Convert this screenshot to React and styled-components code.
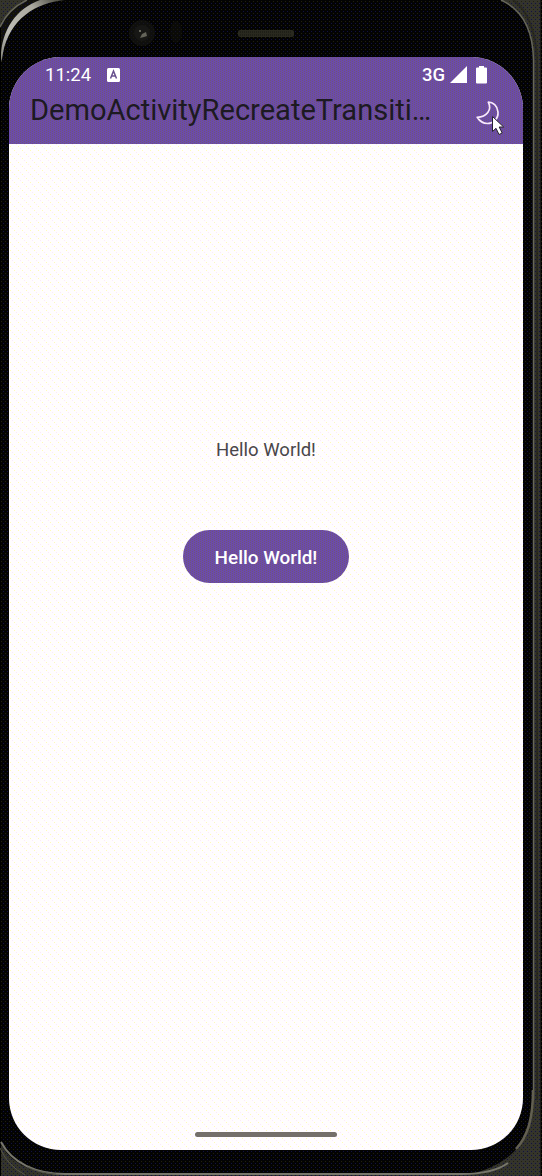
import React from "react";
import styled, { createGlobalStyle, css } from "styled-components";

const GlobalStyle = createGlobalStyle`
  body { margin: 0; background: #060603; overflow: hidden; }
  * { box-sizing: border-box; }
`;

const purpleDither = css`
  background-color: #6b4bac;
  background-image:
    radial-gradient(circle at 1.5px 1.5px, #725671 0.7px, transparent 0.8px),
    radial-gradient(circle at 1.5px 1.5px, #725671 0.7px, transparent 0.8px),
    radial-gradient(circle at 1.5px 1.5px, #725671 0.7px, transparent 0.8px),
    radial-gradient(circle at 1.5px 1.5px, #725671 0.7px, transparent 0.8px);
  background-size: 4px 4px;
  background-position: 0 0, 2px 1px, 0 2px, 2px 3px;
`;

const Device = styled.main`
  position: relative;
  width: 542px;
  height: 1176px;
  padding: 57px 19px 26px 9px;
  overflow: hidden;
  font-family: Roboto, "Liberation Sans", sans-serif;
`;

const FrameArt = styled.svg`
  position: absolute;
  inset: 0;
`;

const Screen = styled.section`
  position: relative;
  display: flex;
  flex-direction: column;
  width: 514px;
  height: 1093px;
  border-radius: 52px;
  overflow: hidden;
  background-color: #fffdfe;
  background-image:
    radial-gradient(circle at 0.5px 0.5px, #fffbb4 0.6px, transparent 0.61px),
    radial-gradient(circle at 0.5px 0.5px, #fffbb4 0.6px, transparent 0.61px),
    radial-gradient(circle at 0.5px 0.5px, #fbe8fb 0.6px, transparent 0.61px),
    radial-gradient(circle at 0.5px 0.5px, #fbe8fb 0.6px, transparent 0.61px);
  background-size: 8px 8px;
  background-position: 1px 1px, 5px 5px, 3px 3px, 7px 7px;
`;

const Header = styled.header`
  flex: none;
  height: 87px;
  ${purpleDither}
`;

const StatusBar = styled.div`
  display: flex;
  align-items: center;
  height: 34px;
  padding: 1px 36px 0 36px;
  color: #fff;
  font-size: 18px;
`;

const Clock = styled.span`
  width: 62px;
  font-size: 18.5px;
`;

const Signals = styled.div`
  display: flex;
  align-items: center;
  margin-left: auto;
  font-size: 18.5px;
  font-weight: 500;
`;

const Signal = styled.svg`
  margin-left: 5px;
`;

const Battery = styled.svg`
  margin-left: 9px;
`;

const AppBar = styled.div`
  display: flex;
  align-items: center;
  justify-content: space-between;
  height: 40px;
  padding: 0 21.5px 3px 21px;
`;

const Title = styled.h1`
  margin: 0;
  color: #1d1a22;
  font-size: 29.05px;
  line-height: 36px;
  font-weight: 400;
  white-space: nowrap;
`;

const ThemeButton = styled.button`
  display: flex;
  width: 28px;
  height: 28px;
  padding: 0;
  border: 0;
  background: none;
  transform: translateY(3px);
`;

const Content = styled.div`
  flex: 1;
  display: flex;
  flex-direction: column;
  align-items: center;
  padding-top: 295px;
`;

const Message = styled.p`
  margin: 0 0 69px;
  font-size: 18.5px;
  line-height: 22px;
  color: #49464a;
`;

const ActionButton = styled.button`
  width: 166px;
  height: 53px;
  padding: 2px 0 0;
  border: 0;
  border-radius: 27px;
  color: #fff;
  font: 500 18.9px Roboto, sans-serif;
  ${purpleDither}
`;

const HomeIndicator = styled.div`
  flex: none;
  align-self: center;
  width: 142px;
  height: 5px;
  margin-bottom: 13px;
  border-radius: 3px;
  background: #747069;
`;

const Pointer = styled.svg`
  position: absolute;
  left: 490.5px;
  top: 115px;
`;

function DeviceFrame() {
  return (
    <FrameArt width="542" height="1176" viewBox="0 0 542 1176" fill="none" aria-hidden="true">
      <defs>
        <pattern id="grain" width="4" height="4" patternUnits="userSpaceOnUse">
          <path d="M1 1h1v1h-1z" fill="#22220c" />
          <path d="M3 3h1v1h-1z" fill="#101044" />
        </pattern>
        <linearGradient id="rim" x1="0" y1="60" x2="62" y2="0" gradientUnits="userSpaceOnUse">
          <stop stopColor="#85857b" />
          <stop offset=".3" stopColor="#bdbdb7" />
          <stop offset=".7" stopColor="#aaa99e" />
          <stop offset="1" stopColor="#44443a" />
        </linearGradient>
      </defs>
      <path d="M0 0h542v1176H0z" fill="#34342c" />
      <path d="M540.5 0H542v1176h-1.5zM0 28h1v1148H0z" fill="#000" />
      <path d="M0 28Q8 9 27 0H65V60H1V28z" fill="#11110d" />
      <path d="M1 60C3 26 27 5 60 0H501C522 9 533 29 533 60V1100C533 1138 512 1165 470 1174H62C30 1174 7 1160 1 1143Z" fill="#030303" />
      <path d="M513 0C528 10 536 33 537 60V1100" stroke="#292920" strokeWidth="2" />
      <path d="M0 0h542v1176H0z" fill="url(#grain)" />
      <path d="M0 27Q8 9 27 0" stroke="#666659" strokeWidth="1.5" />
      <path d="M1 58C1 30 17 8 40 0H65C35 3 10 19 3 53L1.5 62Z" fill="url(#rim)" />
      <path d="M501 0C521 9 533 29 533.5 60V1100" stroke="#66665a" strokeWidth="1.5" />
      <path d="M533 1090C533 1118 528 1136 516 1149" stroke="#625f50" strokeWidth="2.5" />
      <path d="M508 1163C497 1171 481 1174 462 1174H65C36 1174 12 1163 1 1142" stroke="#77766b" strokeWidth="2" />
      <path d="M0 1148Q7 1165 25 1175" stroke="#555548" strokeWidth="1" />
      <path d="M27 1167Q40 1173 56 1174" stroke="#55554a" strokeWidth="1" />
      <circle cx="142" cy="33" r="13" fill="#171714" fillOpacity=".6" />
      <circle cx="142" cy="33" r="8" fill="#171715" />
      <path d="M139 30h2v2h-2zM142 34l4-2 1 4-3 1-4 1z" fill="#64645a" />
      <ellipse cx="176" cy="32" rx="6" ry="11" fill="#11110b" fillOpacity=".5" />
      <rect x="238" y="30" width="56" height="7" rx="2" fill="#29291f" />
      <path d="M240 32h52M240 35h52" stroke="#161610" strokeDasharray="1 1" />
    </FrameArt>
  );
}

export default function App() {
  return (
    <>
      <GlobalStyle />
      <Device>
        <DeviceFrame />
        <Screen>
          <Header>
            <StatusBar>
              <Clock>11:24</Clock>
              <svg width="13" height="14" viewBox="0 0 13 14" fill="none">
                <rect width="13" height="14" rx="1.5" fill="#fff" />
                <path d="M3.5 10.5 6.5 3l3 7.5M4.6 8h3.8" stroke="#68518e" strokeWidth="1.5" />
              </svg>
              <Signals>
                3G
                <Signal width="17" height="17" viewBox="0 0 17 17"><path d="M0 17 17 0V17Z" fill="#fff" /></Signal>
                <Battery width="11" height="18" viewBox="0 0 11 18"><path d="M3 0h5v1.5h2q1 0 1 1v14q0 1-1 1H1q-1 0-1-1v-14q0-1 1-1h2z" fill="#fff" /></Battery>
              </Signals>
            </StatusBar>
            <AppBar>
              <Title>DemoActivityRecreateTransiti…</Title>
              <ThemeButton aria-label="Dark theme">
                <svg width="28" height="28" viewBox="0 0 28 28" fill="none">
                  <path d="M14.3 3.2C19 3.2 23.4 6.5 24 13C24.5 20 19 24.5 13.5 24.5C9 24.5 5.5 22 3.2 18.3C12.8 18 18.2 11 14.3 3.2Z" stroke="#f8e9fc" strokeWidth="1.7" strokeLinejoin="round" />
                </svg>
              </ThemeButton>
            </AppBar>
          </Header>
          <Content>
            <Message>Hello World!</Message>
            <ActionButton>Hello World!</ActionButton>
          </Content>
          <HomeIndicator />
        </Screen>
        <Pointer width="15" height="21" viewBox="0 0 15 21">
          <path d="M1.5 1.5v15l3.5-3.2 3 6.2 3.2-1.5-3-6h4.5z" fill="#fff" stroke="#29232f" strokeWidth="1" />
        </Pointer>
      </Device>
    </>
  );
}
